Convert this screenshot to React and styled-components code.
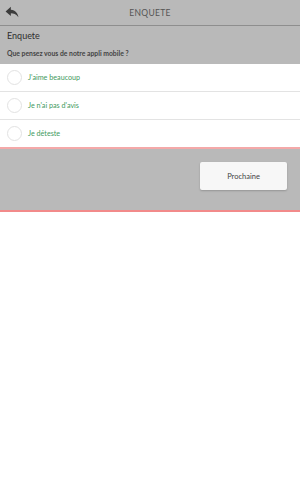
import React from "react"
import styled, { createGlobalStyle } from "styled-components"

const GlobalStyle = createGlobalStyle`
  html, body {
    margin: 0;
    padding: 0;
    background: #fff;
    font-family: Lato, "Open Sans", sans-serif;
  }
`

const options = ["J'aime beaucoup", "Je n'ai pas d'avis", "Je déteste"]

function BackIcon() {
    return (
        <svg width="14" height="12" viewBox="0 0 24 20">
            <path d="M10 1 L1 9 L10 17 L10 12 C15 12 19 13.5 23 19 C22 12 18 7 10 6 Z" fill="#3c3c3c" />
        </svg>
    )
}

export default function App() {
    return (
        <Page>
            <GlobalStyle />
            <Header>
                <BackButton><BackIcon /></BackButton>
                <HeaderTitle>ENQUETE</HeaderTitle>
            </Header>
            <SectionTitle>Enquete</SectionTitle>
            <Question>Que pensez vous de notre appli mobile ?</Question>
            <OptionList>
                {options.map((o) => (
                    <OptionRow key={o}>
                        <Radio />
                        <OptionLabel>{o}</OptionLabel>
                    </OptionRow>
                ))}
            </OptionList>
            <Footer>
                <NextButton>Prochaine</NextButton>
            </Footer>
        </Page>
    )
}

const Page = styled.div`
    width: 300px;
    background: #fff;
`

const Header = styled.header`
    height: 25px;
    display: flex;
    align-items: center;
    justify-content: center;
    position: relative;
    background: #b9b9b9;
    border-bottom: 1px solid #8e8e8e;
`

const BackButton = styled.div`
    position: absolute;
    left: 5px;
    top: 6px;
    display: flex;
`

const HeaderTitle = styled.h1`
    margin: 0;
    font-size: 8.5px;
    font-weight: 400;
    letter-spacing: 0.3px;
    color: #555;
`

const SectionTitle = styled.div`
    background: #b9b9b9;
    padding: 4px 7px 0;
    height: 16px;
    font-size: 9px;
    color: #2e2e2e;
`

const Question = styled.div`
    background: #b9b9b9;
    padding: 3px 7px 0;
    height: 15px;
    font-size: 6.8px;
    font-weight: 700;
    color: #444;
`

const OptionList = styled.div`
    background: #fff;
    border-bottom: 2px solid #f4a9a9;
`

const OptionRow = styled.div`
    height: 27px;
    display: flex;
    align-items: center;
    gap: 6px;
    padding-left: 7px;
    border-bottom: 1px solid #e3e3e3;
    &:last-child {
        border-bottom: none;
    }
`

const Radio = styled.span`
    width: 15px;
    height: 15px;
    border-radius: 50%;
    border: 1px solid #e2e2e2;
    box-sizing: border-box;
`

const OptionLabel = styled.span`
    font-size: 7.2px;
    color: #3f9a5e;
`

const Footer = styled.div`
    height: 63px;
    background: #b9b9b9;
    border-bottom: 2px solid #f28a8a;
    display: flex;
    justify-content: flex-end;
    align-items: flex-start;
    padding: 13px 13px 0 0;
    box-sizing: border-box;
`

const NextButton = styled.button`
    width: 87px;
    height: 28px;
    border: none;
    border-radius: 2px;
    background: #f7f7f7;
    box-shadow: 0 1px 2px rgba(0, 0, 0, 0.2);
    font-family: Lato, "Open Sans", sans-serif;
    font-size: 7.5px;
    color: #444;
`
